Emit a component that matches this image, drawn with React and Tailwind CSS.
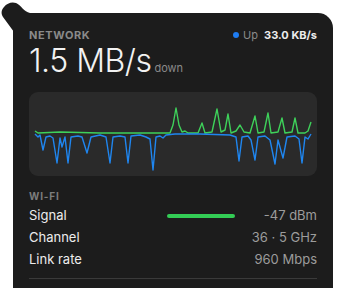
const green = [
  [35, 131], [38, 133], [60, 132], [100, 133], [170, 133], [173, 125], [176, 108], [179, 125], [182, 132],
  [185, 131], [188, 133], [198, 133], [202, 123], [205, 133], [212, 132], [217, 109], [221, 132], [225, 130],
  [228, 114], [231, 133], [236, 131], [240, 125], [244, 132], [250, 133], [255, 116], [258, 133], [264, 132],
  [268, 113], [271, 133], [278, 132], [282, 118], [285, 133], [292, 132], [295, 118], [298, 133], [305, 133],
  [308, 131], [311, 122],
];

const blue = [
  [35, 134], [38, 137], [40, 135], [43, 150], [46, 137], [50, 136], [53, 138], [57, 163], [60, 138], [62, 147],
  [65, 137], [68, 163], [71, 137], [78, 136], [82, 137], [87, 153], [91, 137], [100, 135], [106, 137], [110, 163],
  [113, 137], [120, 136], [125, 137], [128, 163], [131, 136], [140, 135], [146, 137], [150, 139], [153, 170],
  [156, 137], [160, 136], [163, 138], [166, 135], [175, 134], [200, 134], [230, 135], [236, 137], [239, 161],
  [242, 137], [248, 136], [251, 140], [255, 160], [258, 137], [265, 136], [270, 140], [275, 164], [278, 140],
  [283, 158], [287, 137], [295, 136], [299, 139], [302, 163], [305, 137], [308, 139], [311, 134],
];

// chart box sits at x=29, y=92 on the page
const toPoints = (pts) => pts.map(([x, y]) => `${x - 29},${y - 92}`).join(' ');

function Row({ label, value, children }) {
  return (
    <div className="flex items-center h-[22px]">
      <span className="text-[13px] text-[#ececec] w-[138px]">{label}</span>
      <div className="flex-1">{children}</div>
      <span className="text-[13px] text-[#9c9c9c]">{value}</span>
    </div>
  );
}

export default function App() {
  return (
    <div
      className="w-[346px] h-[288px] bg-white relative overflow-hidden"
      style={{ fontFamily: 'Inter, "Liberation Sans", sans-serif' }}
    >
      {/* popover tail */}
      <svg className="absolute left-0 top-0" width="40" height="40" viewBox="0 0 40 40">
        <path d="M30,13 C24,12 21,5 16,3 C12,1.5 7,3 4,7 C1,10 1,14 3,17 L14,32 L14,13 Z" fill="#1c1c1c" />
      </svg>

      <div className="ml-[13px] mt-[13px] w-[320px] h-[300px] bg-[#1c1c1c] rounded-tr-[15px] px-[16px] pt-[14px]">
        <div className="flex items-center justify-between h-[16px]">
          <span className="text-[11px] font-bold tracking-[0.6px] text-[#8a8a8a]">NETWORK</span>
          <div className="flex items-center text-[11px]">
            <span className="w-[6px] h-[6px] rounded-full bg-[#1e7cf2] mr-[4px]" />
            <span className="text-[#8a8a8a] mr-[6px]">Up</span>
            <span className="font-bold text-[#ececec]">33.0 KB/s</span>
          </div>
        </div>

        <div className="flex items-baseline mt-[2px] h-[36px]">
          <span className="text-[32px] font-light text-[#f2f2f2] leading-none tracking-[-0.5px]">1.5 MB/s</span>
          <span className="text-[11px] text-[#8a8a8a] ml-[3px]">down</span>
        </div>

        <div className="mt-[11px] h-[84px] w-[288px] rounded-[9px] bg-[#2a2a2a]">
          <svg width="288" height="84" viewBox="0 0 288 84">
            <polyline points={toPoints(green)} fill="none" stroke="#3ed15a" strokeWidth="1.4" strokeLinejoin="round" />
            <polyline points={toPoints(blue)} fill="none" stroke="#1f86f0" strokeWidth="1.4" strokeLinejoin="round" />
          </svg>
        </div>

        <div className="mt-[13px] text-[10px] font-bold tracking-[0.8px] text-[#7d7d7d] h-[14px] leading-[14px]">WI-FI</div>

        <div className="mt-[2px]">
          <Row label="Signal" value="-47 dBm">
            <div className="w-[68px] h-[4px] rounded-full bg-[#33cc55]" />
          </Row>
          <Row label="Channel" value="36 · 5 GHz" />
          <Row label="Link rate" value="960 Mbps" />
        </div>

        <div className="mt-[7px] h-px bg-[#3a3a3a]" />
      </div>
    </div>
  );
}
